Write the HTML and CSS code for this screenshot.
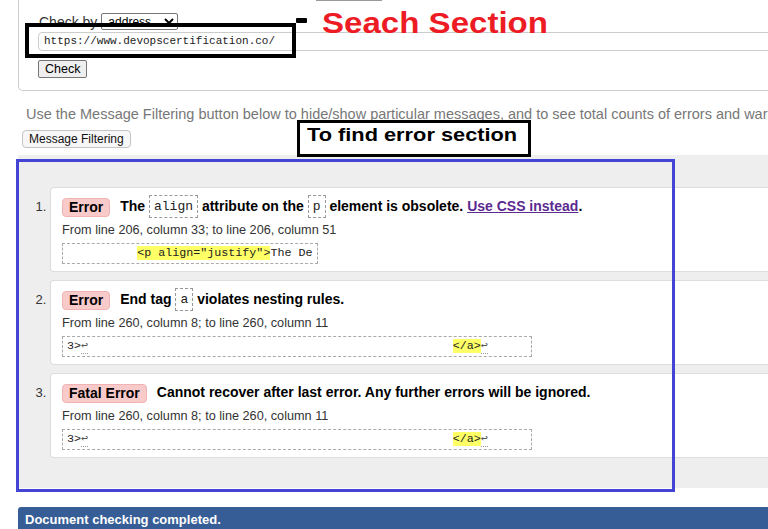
FILE: index.html
```html
<!DOCTYPE html>
<html lang="en">
<head>
<meta charset="utf-8">
<title>Nu Html Checker</title>
<link rel="stylesheet" href="styles.css">
</head>
<body>
<div class="page">
  <div class="checker">
    <div class="toprow"><span class="tab-edge"></span></div>
    <div class="checkby"><span class="checkby-label">Check by</span><select class="select"><option>address</option></select></div>
    <div class="url">https://www.devopscertification.co/</div>
    <button class="check-btn" type="button">Check</button>
  </div>

  <p class="hint">Use the Message Filtering button below to hide/show particular messages, and to see total counts of errors and warnings.</p>
  <button class="filter-btn" type="button">Message Filtering</button>

  <div class="results">
    <ol class="msgs">
      <li class="msg">
        <p class="msg-head"><strong class="badge">Error</strong><span class="msg-text">The <code class="tok">align</code> attribute on the <code class="tok">p</code> element is obsolete. <a class="link" href="#">Use CSS instead</a>.</span></p>
        <p class="loc">From line 206, column 33; to line 206, column 51</p>
        <div class="extract"><code class="extract-code">          <b class="hl">&lt;p align="justify"&gt;</b>The De</code></div>
      </li>
      <li class="msg">
        <p class="msg-head"><strong class="badge">Error</strong><span class="msg-text">End tag <code class="tok">a</code> violates nesting rules.</span></p>
        <p class="loc">From line 260, column 8; to line 260, column 11</p>
        <div class="extract"><code class="extract-code wide">3&gt;<span class="lf">↩</span>                                                    <b class="hl">&lt;/a&gt;</b><span class="lf">↩</span>     </code></div>
      </li>
      <li class="msg">
        <p class="msg-head"><strong class="badge">Fatal Error</strong><span class="msg-text">Cannot recover after last error. Any further errors will be ignored.</span></p>
        <p class="loc">From line 260, column 8; to line 260, column 11</p>
        <div class="extract"><code class="extract-code wide">3&gt;<span class="lf">↩</span>                                                    <b class="hl">&lt;/a&gt;</b><span class="lf">↩</span>     </code></div>
      </li>
    </ol>
  </div>

  <div class="status">Document checking completed.</div>

  <div class="note-box note-search"></div>
  <div class="note-dash"></div>
  <div class="note-label note-label-search">Seach Section</div>
  <div class="note-box note-errors"><span class="note-label-errors">To find error section</span></div>
  <div class="note-frame"></div>
</div>
</body>
</html>
```

FILE: styles.css
```css
html, body {
  margin: 0;
  padding: 0;
  background: #fff;
  overflow: hidden;
}

body {
  font-family: "Liberation Sans", Arial, sans-serif;
  color: #000;
}

.page {
  position: relative;
  width: 1000px;
}

/* ---------- top checker form ---------- */
.checker {
  margin-left: 18px;
  border: 1px solid #ccc;
  border-top: none;
  border-bottom-left-radius: 5px;
  padding: 0 0 12px 19px;
}

.toprow {
  height: 1px;
}

.tab-edge {
  display: block;
  margin-left: 278px;
  width: 66px;
  height: 0;
  border-bottom: 1px solid #999;
}

.checkby {
  display: flex;
  align-items: center;
  margin-top: 12px;
  height: 17px;
}

.checkby-label {
  font-size: 14px;
  color: #333;
  margin-left: 1px;
  margin-right: 4px;
}

.select {
  width: 77px;
  height: 17px;
  font-family: "Liberation Sans", Arial, sans-serif;
  font-size: 12px;
  padding: 0 0 0 2px;
  border: 1px solid #767676;
  border-radius: 2px;
  background: #fff;
  color: #000;
}

.url {
  margin-top: 2px;
  height: 17px;
  line-height: 17px;
  border: 1px solid #ccc;
  border-radius: 4px;
  padding-left: 5px;
  font-family: "Liberation Mono", "DejaVu Sans Mono", monospace;
  font-size: 11px;
  color: #222;
}

.check-btn {
  display: block;
  margin-top: 9px;
  height: 18px;
  padding: 0 6px;
  font-family: "Liberation Sans", Arial, sans-serif;
  font-size: 12.5px;
  color: #000;
  background: #efefef;
  border: 1px solid #767676;
  border-radius: 2px;
}

/* ---------- hint + filter ---------- */
.hint {
  margin: 15px 0 0 26px;
  font-size: 14.5px;
  line-height: 17px;
  color: #777;
  white-space: nowrap;
}

.filter-btn {
  display: block;
  margin: 7px 0 0 22px;
  height: 18px;
  padding: 0 6px;
  font-family: "Liberation Sans", Arial, sans-serif;
  font-size: 12px;
  color: #111;
  background: #f7f7f7;
  border: 1px solid #c4c4c4;
  border-radius: 4px;
}

/* ---------- results ---------- */
.results {
  margin: 7px 0 0 18px;
  background: #eee;
}

.msgs {
  margin: 0;
  padding: 32px 0 30px 32px;
}

.msg {
  background: #fff;
  border: 1px solid #ddd;
  border-right: none;
  border-radius: 4px 0 0 4px;
  padding: 7px 0 7px 11px;
  margin-bottom: 8px;
}

.msg:last-child {
  margin-bottom: 0;
}

.msg::marker {
  font-size: 13px;
  color: #333;
}

.msg-head {
  margin: 0;
  height: 23px;
  line-height: 23px;
  font-size: 14px;
  font-weight: bold;
  white-space: nowrap;
}

.badge {
  display: inline-block;
  vertical-align: middle;
  line-height: 17px;
  padding: 0 6px;
  margin-right: 10px;
  background: #f9caca;
  border: 1px solid #efb3b3;
  border-radius: 4px;
  font-size: 14px;
}

.tok {
  display: inline-block;
  vertical-align: top;
  line-height: 21px;
  padding: 0 4px;
  border: 1px dashed #999;
  font-family: "Liberation Mono", "DejaVu Sans Mono", monospace;
  font-size: 13px;
  font-weight: normal;
  color: #222;
}

.link {
  color: #5b2a91;
  text-decoration: underline;
}

.loc {
  margin: 4px 0 0;
  font-size: 12.7px;
  line-height: 17px;
  color: #333;
}

.extract {
  display: flex;
  margin-top: 4px;
}

.extract-code {
  display: block;
  white-space: pre;
  line-height: 15px;
  padding: 2px 4px;
  border: 1px dashed #aaa;
  font-family: "Liberation Mono", "DejaVu Sans Mono", monospace;
  font-size: 11.7px;
  color: #222;
}

.extract-code.wide {
  padding-right: 8px;
}

.hl {
  font-weight: normal;
  background: #ff6;
}

.lf {
  color: #555;
  border-bottom: 1px dotted #999;
}

/* ---------- status bar ---------- */
.status {
  margin: 19px 0 0 18px;
  height: 30px;
  padding: 2px 0 0 7px;
  line-height: 22px;
  background: #365d95;
  border-top-left-radius: 3px;
  color: #fff;
  font-size: 13px;
  font-weight: bold;
}

/* ---------- annotations (overlays) ---------- */
.note-box {
  position: absolute;
  box-sizing: border-box;
  border: 4px solid #000;
}

.note-search {
  left: 25px;
  top: 23px;
  width: 271px;
  height: 35px;
}

.note-dash {
  position: absolute;
  left: 296px;
  top: 18px;
  width: 11px;
  height: 5px;
  background: #000;
  border-radius: 1px;
}

.note-label-search {
  position: absolute;
  left: 322px;
  top: 9px;
  font-size: 29px;
  line-height: 29px;
  font-weight: bold;
  color: #ed1c24;
  white-space: nowrap;
  transform: scaleX(1.14);
  transform-origin: left top;
}

.note-errors {
  left: 297px;
  top: 120px;
  width: 234px;
  height: 37px;
  border-width: 3px;
  background: #fff;
}

.note-label-errors {
  position: absolute;
  left: 7px;
  top: 2px;
  font-size: 18px;
  line-height: 20px;
  font-weight: bold;
  color: #000;
  white-space: nowrap;
  transform: scaleX(1.21);
  transform-origin: left top;
}

.note-frame {
  position: absolute;
  left: 16px;
  top: 159px;
  width: 659px;
  height: 333px;
  box-sizing: border-box;
  border: 3px solid #4444d4;
}
```
